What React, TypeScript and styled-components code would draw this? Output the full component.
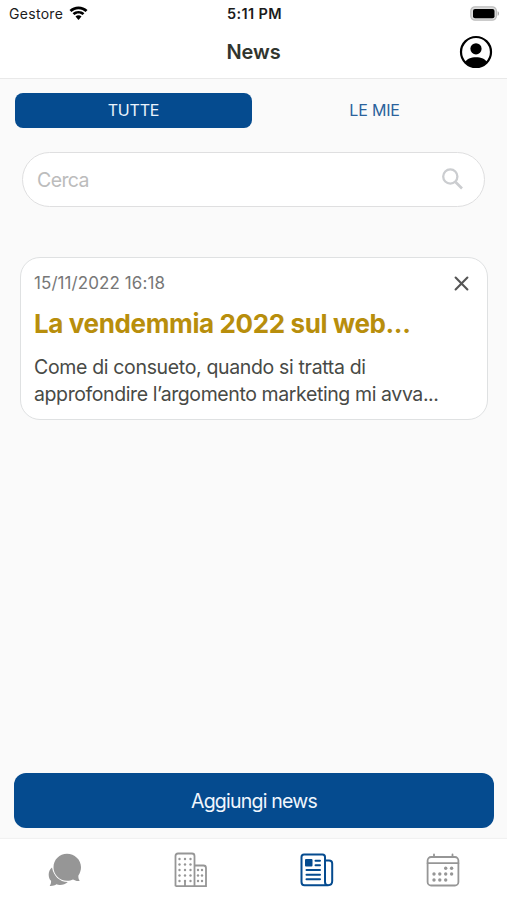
import React from "react";
import styled, { createGlobalStyle } from "styled-components";

const blue = "#054b8f";
const gray = "#969696";

const GlobalStyle = createGlobalStyle`
  * { box-sizing: border-box; }
  body { margin: 0; background: #fafafa; font-family: Inter, "Liberation Sans", sans-serif; }
  button, input { font-family: inherit; }
  svg { display: block; flex: none; }
`;

const Screen = styled.div`
  width: 100%;
  max-width: 507px;
  height: 900px;
  display: flex;
  flex-direction: column;
  background: #fafafa;
  overflow: hidden;
`;

const StatusBar = styled.div`
  height: 27px;
  display: grid;
  grid-template-columns: 1fr auto 1fr;
  align-items: center;
  padding: 0 7px 0 9px;
  background: #fff;
  color: #1b1b1b;
`;

const Carrier = styled.div`
  display: flex;
  align-items: center;
  gap: 6px;
  font-size: 14px;
  letter-spacing: 0.3px;
`;

const Clock = styled.div`
  font-size: 14.5px;
  font-weight: 600;
  letter-spacing: 0.35px;
`;

const Battery = styled.div`
  display: flex;
  justify-content: flex-end;
`;

const Header = styled.header`
  height: 52px;
  display: grid;
  grid-template-columns: 1fr auto 1fr;
  align-items: center;
  padding: 0 14px 1px;
  background: #fff;
  border-bottom: 1px solid #e9e9e9;
`;

const PageTitle = styled.h1`
  grid-column: 2;
  margin: 0;
  color: #31352e;
  font-size: 20px;
  line-height: 24px;
  font-weight: 600;
  letter-spacing: -0.1px;
`;

const Profile = styled.button`
  justify-self: end;
  padding: 0;
  border: 0;
  background: none;
`;

const Content = styled.main`
  flex: 1;
  display: flex;
  flex-direction: column;
`;

const Tabs = styled.div`
  display: grid;
  grid-template-columns: 237px 237px;
  gap: 4px;
  padding: 14px 15px 0;
`;

const Tab = styled.button<{ $active?: boolean }>`
  height: 35px;
  padding: 0 0 1px;
  border: 0;
  border-radius: 8px;
  background: ${(p) => (p.$active ? blue : "transparent")};
  color: ${(p) => (p.$active ? "#eaf3fc" : "#2a629c")};
  font-size: 16px;
  letter-spacing: -0.2px;
`;

const SearchBox = styled.label`
  height: 55px;
  margin: 24px 22px 0;
  padding: 0 21px 0 14px;
  display: flex;
  align-items: center;
  border: 1.5px solid #dfdfe0;
  border-radius: 28px;
  background: #fff;

  svg { margin-bottom: 2px; }
`;

const SearchInput = styled.input`
  flex: 1;
  min-width: 0;
  padding: 0;
  border: 0;
  outline: 0;
  background: none;
  font-size: 19.5px;
  letter-spacing: -0.6px;
  &::placeholder { color: #bcbcbc; opacity: 1; }
`;

const Card = styled.article`
  height: 163px;
  margin: 50px 19px 0 20px;
  padding: 14px 18px 0 13px;
  border: 1.5px solid #dfe1e2;
  border-radius: 20px;
  background: #fff;
`;

const CardTop = styled.div`
  height: 22px;
  display: flex;
  align-items: center;
  justify-content: space-between;
`;

const CardDate = styled.time`
  color: #777;
  font-size: 17px;
  letter-spacing: 0.08px;
`;

const CardTitle = styled.h2`
  margin: 13px 0 0;
  color: #b88e0c;
  font-size: 26px;
  line-height: 34px;
  font-weight: 700;
  letter-spacing: -0.37px;
  white-space: nowrap;
`;

const CardText = styled.p`
  margin: 13px 0 0;
  color: #484a46;
  font-size: 19.5px;
  line-height: 27px;
  white-space: nowrap;
`;

const Line = styled.span<{ $spacing: number }>`
  display: block;
  letter-spacing: ${(p) => p.$spacing}px;
`;

const AddButton = styled.button`
  height: 55px;
  margin: auto 13px 11px 14px;
  padding: 1px 0 0;
  border: 0;
  border-radius: 12px;
  background: ${blue};
  color: #f0f6fd;
  font-size: 19.5px;
  letter-spacing: -0.77px;
`;

const NavBar = styled.nav`
  height: 61px;
  display: grid;
  grid-template-columns: repeat(4, 1fr);
  padding: 0 1px 0 2px;
  background: #fff;
  box-shadow: 0 -1px 1px #f1f1f1;
`;

const NavItem = styled.button<{ $active?: boolean }>`
  display: flex;
  justify-content: center;
  align-items: center;
  padding: 0;
  border: 0;
  background: none;
  color: ${(p) => (p.$active ? blue : gray)};
`;

const WifiIcon = () => (
  <svg width="19" height="15" viewBox="0 0 19 15" fill="#000">
    <path d="M9.5 0.6C13 0.6 16.1 1.9 18.5 4.1L16.6 6C14.7 4.3 12.2 3.2 9.5 3.2S4.3 4.3 2.4 6L0.5 4.1C2.9 1.9 6 0.6 9.5 0.6Z" />
    <path d="M9.5 5.1C11.8 5.1 13.8 6 15.4 7.3L13.6 9.1C12.5 8.2 11.1 7.6 9.5 7.6S6.5 8.2 5.4 9.1L3.6 7.3C5.2 6 7.2 5.1 9.5 5.1Z" />
    <path d="M9.5 9.3C10.7 9.3 11.7 9.7 12.5 10.4L9.5 13.9L6.5 10.4C7.3 9.7 8.3 9.3 9.5 9.3Z" />
  </svg>
);

const BatteryIcon = () => (
  <svg width="31" height="15" viewBox="0 0 31 15">
    <rect x="1.8" y="0.8" width="25.6" height="13.4" rx="4.2" fill="#ddd" stroke="#bdbdbd" strokeWidth="1.2" />
    <rect x="4" y="3" width="21.5" height="9.2" rx="2" fill="#000" />
    <path d="M28.6 5.2C30.5 5.8 30.5 9.2 28.6 9.8Z" fill="#aaa" />
  </svg>
);

const ProfileIcon = () => (
  <svg width="34" height="34" viewBox="0 0 34 34">
    <clipPath id="profile-ring"><circle cx="17" cy="17" r="15" /></clipPath>
    <circle cx="17" cy="17" r="15" fill="#fff" stroke="#000" strokeWidth="2.2" />
    <circle cx="17" cy="13.8" r="5.6" />
    <path d="M6 27.5C8.5 20.4 25.5 20.4 28 27.5V34H6Z" clipPath="url(#profile-ring)" />
  </svg>
);

const SearchIcon = () => (
  <svg width="21" height="22" viewBox="0 0 21 22" fill="none" stroke="#cbcdd0">
    <circle cx="8.3" cy="8.5" r="7.1" strokeWidth="2.3" />
    <path d="M13.5 14L20 20.5" strokeWidth="2.6" />
  </svg>
);

const CloseIcon = () => (
  <svg width="15" height="15" viewBox="0 0 15 15" fill="none" stroke="#555" strokeWidth="2.1" strokeLinecap="round">
    <path d="M1.6 1.6L13.4 13.4M13.4 1.6L1.6 13.4" />
  </svg>
);

const ChatIcon = () => (
  <svg width="34" height="34" viewBox="0 0 34 34" fill="currentColor">
    <path d="M4 14.5C-0.5 18 0 25 3 27.8C3.3 30.2 2.5 31.5 1.7 33C4.5 33.2 7 32.3 8.4 31.3C12 32.8 17 31.6 19.8 29C12 29.2 5.5 23 4 14.5Z" />
    <path d="M19 0.8C11.5 0.8 5.5 6.7 5.5 14.2S11.5 27.7 19 27.7C21.3 27.7 23.3 27.2 25 26.4C27 27.6 29.5 28.3 31.7 27.7C30.3 26 30.3 23.8 30.4 22.5C32 20 33 17.3 33 14.2C33 6.7 26.5 0.8 19 0.8Z" />
  </svg>
);

const dots = (xs: number[], ys: number[]) => ys.flatMap((y) => xs.map((x) => ({ x, y })));

const BuildingIcon = () => (
  <svg width="34" height="36" viewBox="0 0 34 36" fill="none" stroke="currentColor" strokeWidth="1.8">
    <path d="M1.5 34.2V4Q1.5 1.5 4 1.5H18Q20.5 1.5 20.5 4V34.2H1.5M20.5 13.5H29.5Q32 13.5 32 16V34.2H20.5M11 34V28.5" />
    <g fill="currentColor" stroke="none">
      {[...dots([5.5, 11, 16.5], [7, 12.5, 18, 23.5, 29]), ...dots([24, 28], [18, 23.5, 29])].map((d, i) => (
        <circle key={i} cx={d.x} cy={d.y} r="1.2" />
      ))}
    </g>
  </svg>
);

const NewsIcon = () => (
  <svg width="34" height="34" viewBox="0 0 34 34" fill="none" stroke="currentColor" strokeWidth="2" strokeLinecap="round" strokeLinejoin="round">
    <path d="M25 29V4Q25 1.5 22.5 1.5H4Q1.5 1.5 1.5 4V29Q1.5 32.2 4.5 32.2H28Q32.2 32.2 32.2 28V10.5Q32.2 7.5 29 7.5H25M25 29Q25 32.2 28 32.2" />
    <path d="M15.5 7.7H20M15.5 12.3H20M6.5 17.1H20M6.5 21.7H20M6.5 26.3H20" />
    <rect x="6" y="7" width="5.5" height="5.5" fill="currentColor" />
  </svg>
);

const CalendarIcon = () => (
  <svg width="34" height="34" viewBox="0 0 34 34" fill="none" stroke="currentColor" strokeWidth="1.8" strokeLinecap="round">
    <path d="M8 1.500V4M26.500 1.500V4" />
    <rect x="1.600" y="4" width="30.800" height="28.500" rx="3.500" />
    <path d="M1.600 10.200H32.400" />
    <g fill="currentColor" stroke="none">
      {[...dots([19.7, 25.6], [15.3]), ...dots([8, 13.8, 19.7, 25.6], [21]), ...dots([8, 13.8, 19.7], [27])].map((d, i) => (
        <circle key={i} cx={d.x} cy={d.y} r="1.7" />
      ))}
    </g>
  </svg>
);

export default function App() {
  return (
    <Screen>
      <GlobalStyle />
      <StatusBar>
        <Carrier>Gestore<WifiIcon /></Carrier>
        <Clock>5:11 PM</Clock>
        <Battery><BatteryIcon /></Battery>
      </StatusBar>
      <Header>
        <PageTitle>News</PageTitle>
        <Profile aria-label="Profilo"><ProfileIcon /></Profile>
      </Header>
      <Content>
        <Tabs>
          <Tab $active>TUTTE</Tab>
          <Tab>LE MIE</Tab>
        </Tabs>
        <SearchBox>
          <SearchInput placeholder="Cerca" />
          <SearchIcon />
        </SearchBox>
        <Card>
          <CardTop>
            <CardDate>15/11/2022 16:18</CardDate>
            <CloseIcon />
          </CardTop>
          <CardTitle>La vendemmia 2022 sul web...</CardTitle>
          <CardText>
            <Line $spacing={-0.34}>Come di consueto, quando si tratta di</Line>
            <Line $spacing={-0.4}>approfondire l’argomento marketing mi avva...</Line>
          </CardText>
        </Card>
        <AddButton>Aggiungi news</AddButton>
      </Content>
      <NavBar>
        <NavItem aria-label="Messaggi"><ChatIcon /></NavItem>
        <NavItem aria-label="Aziende"><BuildingIcon /></NavItem>
        <NavItem $active aria-label="News"><NewsIcon /></NavItem>
        <NavItem aria-label="Calendario"><CalendarIcon /></NavItem>
      </NavBar>
    </Screen>
  );
}
